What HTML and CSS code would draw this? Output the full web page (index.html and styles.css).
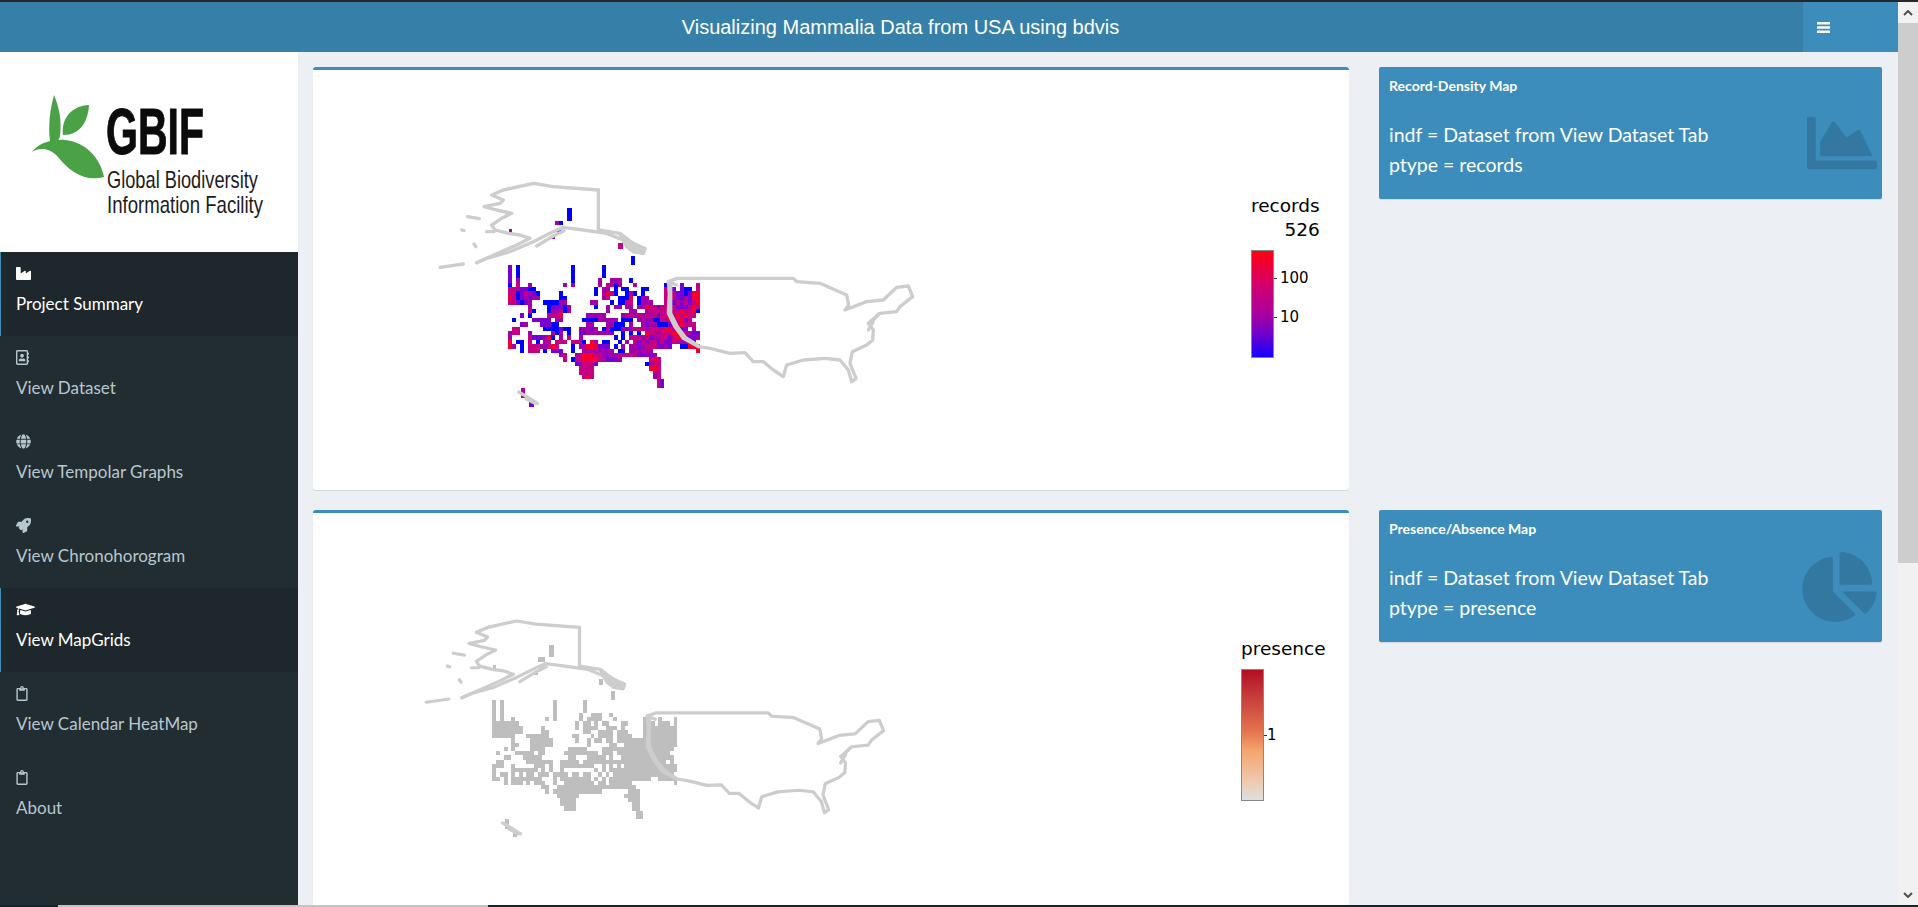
FILE: index.html
```html
<!DOCTYPE html>
<html lang="en">
<head>
    <meta charset="UTF-8">
    <title>Visualizing Mammalia Data from USA using bdvis</title>
    <link rel="stylesheet" href="styles.css">
</head>
<body>
    <div class="window">
        <div class="top-line"></div>
        <div class="frame">
            <div class="page">
                <header class="main-header">
                    <div class="header-title">Visualizing Mammalia Data from USA using bdvis</div>
                    <a class="sidebar-toggle">
                        <svg viewBox="0 0 13 11" width="13" height="11"><path d="M0 0h13v2.4H0zM0 4.3h13v2.4H0zM0 8.6h13V11H0z"/></svg>
                    </a>
                </header>
                <div class="wrapper">
                    <aside class="sidebar">
                        <div class="logo">
                            <svg class="logo-svg" viewBox="0 0 298 200" width="298" height="200">
                                <path class="leaf" d="M54 43C50 58 48 72 50 90L53 91C57 90 59 88 60 84C62 68 59 55 54 43Z"/>
                                <path class="leaf" d="M89 53C70 54 61 68 63 83C80 83 88 70 89 53Z"/>
                                <path class="leaf" d="M32 100C38 92 50 87 65 88C85 90 100 105 104 125C85 130 70 120 58 105C50 96 40 95 32 100Z"/>
                                <text class="logo-big" transform="translate(106 102) scale(.631 1)">GBIF</text>
                                <text class="logo-small" transform="translate(107 136) scale(.76 1)">Global Biodiversity</text>
                                <text class="logo-small" transform="translate(107 161) scale(.775 1)">Information Facility</text>
                            </svg>
                        </div>
                        <nav class="menu">
                            <a class="menu-item active">
                                <svg class="menu-icon" viewBox="0 0 512 512" width="15" height="15"><path d="M475.115 163.781L336 252.309v-68.28c0-18.916-20.931-30.399-36.885-20.248L160 252.309V56c0-13.255-10.745-24-24-24H24C10.745 32 0 42.745 0 56v400c0 13.255 10.745 24 24 24h464c13.255 0 24-10.745 24-24V184.029c0-18.917-20.931-30.399-36.885-20.248z"/></svg>
                                <span>Project Summary</span>
                            </a>
                            <a class="menu-item">
                                <svg class="menu-icon" viewBox="0 0 448 512" width="13" height="15"><path d="M436 160c6.6 0 12-5.4 12-12v-40c0-6.6-5.4-12-12-12h-20V48c0-26.5-21.5-48-48-48H48C21.5 0 0 21.5 0 48v416c0 26.5 21.5 48 48 48h320c26.5 0 48-21.5 48-48v-48h20c6.6 0 12-5.4 12-12v-40c0-6.6-5.4-12-12-12h-20v-64h20c6.6 0 12-5.4 12-12v-40c0-6.6-5.4-12-12-12h-20v-64h20zm-68 304H48V48h320v416zM208 256c35.3 0 64-28.7 64-64s-28.7-64-64-64-64 28.7-64 64 28.7 64 64 64zm-89.6 128h179.2c12.4 0 22.4-8.6 22.4-19.2v-19.2c0-31.8-30.1-57.6-67.2-57.6-10.8 0-18.7 8-44.8 8-26.9 0-33.4-8-44.8-8-37.1 0-67.2 25.8-67.2 57.6v19.2c0 10.6 10 19.2 22.4 19.2z"/></svg>
                                <span>View Dataset</span>
                            </a>
                            <a class="menu-item">
                                <svg class="menu-icon" viewBox="0 0 496 512" width="15" height="15"><path d="M336.5 160C322 70.7 287.8 8 248 8s-74 62.7-88.5 152h177zM152 256c0 22.2 1.2 43.5 3.3 64h185.3c2.1-20.5 3.3-41.8 3.3-64s-1.2-43.5-3.3-64H155.3c-2.1 20.5-3.3 41.8-3.3 64zm324.7-96c-28.6-67.9-86.5-120.4-158-141.6 24.4 33.8 41.2 84.7 50 141.6h108zM177.2 18.4C105.8 39.6 47.8 92.1 19.3 160h108c8.7-56.9 25.5-107.8 49.9-141.6zM487.4 192H372.7c2.1 21 3.3 42.5 3.3 64s-1.2 43-3.3 64h114.6c5.5-20.5 8.6-41.8 8.6-64s-3.1-43.5-8.5-64zM120 256c0-21.5 1.2-43 3.3-64H8.6C3.2 212.5 0 233.8 0 256s3.2 43.5 8.6 64h114.6c-2-21-3.2-42.5-3.2-64zm39.5 96c14.5 89.3 48.7 152 88.5 152s74-62.7 88.5-152h-177zm159.3 141.6c71.4-21.2 129.4-73.7 158-141.6h-108c-8.8 56.9-25.6 107.8-50 141.6zM19.3 352c28.6 67.9 86.5 120.4 158 141.6-24.4-33.8-41.2-84.7-50-141.6h-108z"/></svg>
                                <span>View Tempolar Graphs</span>
                            </a>
                            <a class="menu-item">
                                <svg class="menu-icon" viewBox="0 0 512 512" width="15" height="15"><path d="M505.05 19.1a15.89 15.89 0 0 0-12.2-12.2C460.65 0 435.46 0 410.36 0c-103.2 0-165.1 55.2-211.29 128H94.87A48 48 0 0 0 52 154.49l-49.42 98.8A24 24 0 0 0 24.07 288h103.77l-22.47 22.47a32 32 0 0 0 0 45.25l50.9 50.91a32 32 0 0 0 45.26 0L224 384.16V488a24 24 0 0 0 34.7 21.49l98.7-49.39a47.91 47.91 0 0 0 26.5-42.9V312.79c72.59-46.3 128-108.4 128-211.09.1-25.2.1-50.4-6.85-82.6zM384 168a40 40 0 1 1 40-40 40 40 0 0 1-40 40z"/></svg>
                                <span>View Chronohorogram</span>
                            </a>
                            <a class="menu-item active">
                                <svg class="menu-icon" viewBox="0 0 640 512" width="19" height="15"><path d="M622.34 153.2L343.4 67.5c-15.2-4.67-31.6-4.67-46.79 0L17.66 153.2c-23.54 7.23-23.54 38.36 0 45.59l48.63 14.94c-10.67 13.19-17.23 29.28-17.88 46.9C38.78 266.15 32 276.11 32 288c0 10.78 5.68 19.85 13.86 25.65L20.33 428.53C18.11 438.52 25.71 448 35.94 448h56.11c10.24 0 17.84-9.48 15.62-19.47L82.14 313.65C90.32 307.85 96 298.78 96 288c0-11.57-6.47-21.25-15.66-26.87.76-15.02 8.44-28.3 20.69-36.72L296.6 284.5c9.06 2.78 26.44 6.25 46.79 0l278.95-85.7c23.55-7.24 23.55-38.36 0-45.6zM352.79 315.09c-28.53 8.76-52.84 3.92-65.59 0l-145.02-44.55L128 384c0 35.35 85.96 64 192 64s192-28.65 192-64l-14.18-113.47-145.03 44.56z"/></svg>
                                <span>View MapGrids</span>
                            </a>
                            <a class="menu-item">
                                <svg class="menu-icon" viewBox="0 0 384 512" width="12" height="15"><path d="M336 64h-80c0-35.3-28.7-64-64-64s-64 28.7-64 64H48C21.5 64 0 85.5 0 112v352c0 26.5 21.5 48 48 48h288c26.5 0 48-21.5 48-48V112c0-26.5-21.5-48-48-48zM192 40c13.3 0 24 10.7 24 24s-10.7 24-24 24-24-10.7-24-24 10.7-24 24-24zm144 418c0 3.3-2.7 6-6 6H54c-3.3 0-6-2.7-6-6V118c0-3.3 2.7-6 6-6h42v36c0 6.6 5.4 12 12 12h168c6.6 0 12-5.4 12-12v-36h42c3.3 0 6 2.7 6 6z"/></svg>
                                <span>View Calendar HeatMap</span>
                            </a>
                            <a class="menu-item">
                                <svg class="menu-icon" viewBox="0 0 384 512" width="12" height="15"><path d="M336 64h-80c0-35.3-28.7-64-64-64s-64 28.7-64 64H48C21.5 64 0 85.5 0 112v352c0 26.5 21.5 48 48 48h288c26.5 0 48-21.5 48-48V112c0-26.5-21.5-48-48-48zM192 40c13.3 0 24 10.7 24 24s-10.7 24-24 24-24-10.7-24-24 10.7-24 24-24zm144 418c0 3.3-2.7 6-6 6H54c-3.3 0-6-2.7-6-6V118c0-3.3 2.7-6 6-6h42v36c0 6.6 5.4 12 12 12h168c6.6 0 12-5.4 12-12v-36h42c3.3 0 6 2.7 6 6z"/></svg>
                                <span>About</span>
                            </a>
                        </nav>
                    </aside>
                    <main class="content">
                        <div class="content-row">
                            <section class="box">
                                <div class="plot">
                                    <svg class="map map-records" id="mapRecords" viewBox="0 0 1560 750"></svg>
                                    <div class="legend legend-records">
                                        <div class="legend-title">records<br>526</div>
                                        <div class="legend-scale">
                                            <div class="bar bar-records"></div>
                                            <div class="ticks">
                                                <div class="tick">100</div>
                                                <div class="tick">10</div>
                                            </div>
                                        </div>
                                    </div>
                                </div>
                            </section>
                            <section class="value-box">
                                <p class="value-title">Record-Density Map</p>
                                <p class="value-text">indf = Dataset from View Dataset Tab<br>ptype = records</p>
                                <svg class="value-icon icon-area" viewBox="0 0 512 512" width="70" height="70"><path d="M500 384c6.6 0 12 5.4 12 12v40c0 6.6-5.4 12-12 12H12c-6.6 0-12-5.4-12-12V76c0-6.6 5.4-12 12-12h40c6.6 0 12 5.4 12 12v308h436zM372.7 159.5L288 216l-85.3-113.7c-5.1-6.8-15.5-6.3-19.9 1L96 248v104h384l-89.9-187.8c-3.2-6.5-11.4-8.7-17.4-4.7z"/></svg>
                            </section>
                        </div>
                        <div class="content-row">
                            <section class="box">
                                <div class="plot">
                                    <svg class="map map-presence" id="mapPresence" viewBox="0 0 1560 750"></svg>
                                    <div class="legend legend-presence">
                                        <div class="legend-title">presence</div>
                                        <div class="legend-scale">
                                            <div class="bar bar-presence"></div>
                                            <div class="ticks">
                                                <div class="tick">1</div>
                                            </div>
                                        </div>
                                    </div>
                                </div>
                            </section>
                            <section class="value-box">
                                <p class="value-title">Presence/Absence Map</p>
                                <p class="value-text">indf = Dataset from View Dataset Tab<br>ptype = presence</p>
                                <svg class="value-icon icon-pie" viewBox="0 0 544 512" width="75" height="70"><path d="M527.79 288H290.5l158.03 158.03c6.04 6.04 15.98 6.53 22.19.68 38.7-36.46 65.32-85.61 73.13-140.86 1.34-9.46-6.51-17.85-16.06-17.85zm-15.83-64.8C503.72 103.74 408.26 8.28 288.8.04 279.68-.59 272 7.1 272 16.24V240h223.77c9.14 0 16.82-7.68 16.19-16.8zM224 288V50.71c0-9.55-8.39-17.4-17.84-16.06C86.99 51.49-4.1 155.6.14 280.37 4.5 408.51 114.83 513.59 243.03 511.98c50.4-.63 96.97-16.87 135.26-44.03 7.9-5.6 8.42-17.23 2.75-23.06L224 288z"/></svg>
                            </section>
                        </div>
                    </main>
                </div>
            </div>
            <div class="scrollbar">
                <div class="scroll-btn"><svg viewBox="0 0 10 6" width="10" height="6"><path d="M1 5l4-4 4 4" /></svg></div>
                <div class="scroll-thumb"></div>
                <div class="scroll-track"></div>
                <div class="scroll-btn"><svg viewBox="0 0 10 6" width="10" height="6"><path d="M1 1l4 4 4-4" /></svg></div>
            </div>
        </div>
        <div class="taskbar"><div class="taskbar-window"></div></div>
    </div>
    <script src="map.js"></script>
</body>
</html>
```

FILE: styles.css
```css
html, body {
    margin: 0;
    padding: 0;
    height: 100%;
    overflow: hidden;
}

body {
    font-family: "Lato", "Open Sans", sans-serif;
    background-color: #ecf0f5;
}

.window {
    display: flex;
    flex-direction: column;
    height: 907px;
}

.top-line {
    height: 2px;
    background-color: #22282c;
    flex: none;
}

.frame {
    display: flex;
    flex: 1;
    min-height: 0;
}

.page {
    flex: 1;
    display: flex;
    flex-direction: column;
    min-width: 0;
}

/* header */
.main-header {
    display: flex;
    height: 50px;
    flex: none;
    background-color: #367fa9;
    color: #fff;
}

.header-title {
    flex: 1;
    text-align: center;
    font-family: "Liberation Sans", Arial, sans-serif;
    font-size: 20px;
    line-height: 50px;
    padding-right: 2px;
}

.sidebar-toggle {
    width: 95px;
    background-color: #3c8dbc;
    display: flex;
    align-items: center;
    padding-left: 14px;
    box-sizing: border-box;
}

.sidebar-toggle svg {
    fill: #fff;
}

.wrapper {
    display: flex;
    flex: 1;
    min-height: 0;
}

/* sidebar */
.sidebar {
    width: 298px;
    flex: none;
    background-color: #222d32;
}

.logo {
    height: 200px;
    background-color: #fff;
}

.logo-svg {
    display: block;
}

.leaf {
    fill: #4aa146;
}

.logo-big {
    font-family: "Liberation Sans", Arial, sans-serif;
    font-weight: bold;
    font-size: 65px;
    fill: #0b0b0b;
    stroke: #0b0b0b;
    stroke-width: 1;
}

.logo-small {
    font-family: "Liberation Sans", Arial, sans-serif;
    font-size: 24px;
    fill: #1c1c1c;
}

.menu-item {
    display: flex;
    flex-direction: column;
    align-items: flex-start;
    height: 84px;
    box-sizing: border-box;
    padding: 14px 5px 0 15px;
    border-left: 1px solid transparent;
    color: #b8c7ce;
    font-size: 17px;
}

.menu-item.active {
    color: #fff;
    background-color: #1e282c;
    border-left-color: #3c8dbc;
}

.menu-icon {
    fill: currentColor;
    margin-bottom: 12px;
}

/* main column */
.content {
    flex: 1;
    padding: 15px 16px 0 15px;
    overflow: hidden;
}

.content-row {
    display: grid;
    grid-template-columns: 1036px 503px;
    gap: 30px;
    align-items: start;
    margin-bottom: 20px;
}

.box {
    background-color: #fff;
    border-top: 3px solid #3c8dbc;
    border-radius: 3px;
    box-shadow: 0 1px 1px rgba(0, 0, 0, 0.1);
    padding: 10px;
}

.plot {
    display: flex;
    align-items: flex-start;
    height: 400px;
}

.map {
    display: block;
    flex: none;
}

.map-records {
    width: 520px;
    height: 250px;
    margin: 90px 0 0 97px;
}

.map-presence {
    width: 503px;
    height: 242px;
    margin: 85px 0 0 84px;
}

.legend {
    font-family: "DejaVu Sans", Verdana, sans-serif;
    color: #000;
    flex: none;
}

.legend-records {
    margin: 114px 0 0 311px;
}

.legend-presence {
    margin: 114px 0 0 331px;
}

.legend-title {
    font-size: 18.5px;
    line-height: 24px;
    text-align: right;
    margin-bottom: 8px;
}

.legend-presence .legend-title {
    text-align: left;
    margin-bottom: 8px;
}

.legend-scale {
    display: flex;
}

.bar {
    width: 23px;
    box-sizing: border-box;
    border: 1px solid #888;
}

.bar-records {
    height: 108px;
    background: linear-gradient(to bottom, #ff0010, #d50068 30%, #a800a0 60%, #6a00d0 80%, #1500ff);
}

.bar-presence {
    height: 132px;
    background: linear-gradient(to bottom, #b10f23, #c63c3a 20%, #e3734f 47%, #f4a56d 62%, #eec9ae 85%, #dfdfdf);
}

.ticks {
    display: flex;
    flex-direction: column;
    gap: 19px;
    padding-top: 18px;
}

.legend-presence .ticks {
    padding-top: 56px;
}

.tick {
    display: flex;
    align-items: center;
    height: 20px;
    font-size: 15px;
}

.tick::before {
    content: "";
    width: 3px;
    height: 1px;
    background-color: #333;
    margin-right: 3px;
}

.legend-presence .tick::before {
    margin-right: 0;
}

/* value boxes */
.value-box {
    position: relative;
    height: 132px;
    box-sizing: border-box;
    background-color: #3c8dbc;
    border-radius: 2px;
    box-shadow: 0 1px 1px rgba(0, 0, 0, 0.1);
    padding: 10px 10px 0;
    color: #fff;
    overflow: hidden;
}

.value-title {
    margin: 0;
    font-size: 14px;
    font-weight: bold;
    line-height: 18px;
}

.value-text {
    margin: 25px 0 0;
    font-size: 19.5px;
    line-height: 30px;
}

.value-icon {
    position: absolute;
    right: 5px;
    top: 41px;
    fill: rgba(0, 0, 0, 0.15);
}

.icon-pie {
    top: 42px;
}

/* maps */
.cell {
    shape-rendering: crispEdges;
}

.outline {
    fill: none;
    stroke: #cdcdcd;
    stroke-width: 10;
    stroke-linejoin: round;
    stroke-linecap: round;
}

.outline-solid {
    fill: #cdcdcd;
}

/* fake browser scrollbar */
.scrollbar {
    width: 20px;
    flex: none;
    display: flex;
    flex-direction: column;
    background-color: #f1f1f1;
}

.scroll-btn {
    height: 21px;
    display: flex;
    align-items: center;
    justify-content: center;
    flex: none;
}

.scroll-btn svg {
    fill: none;
    stroke: #505050;
    stroke-width: 2;
}

.scroll-thumb {
    height: 540px;
    flex: none;
    background-color: #cdcdcd;
}

.scroll-track {
    flex: 1;
}

.taskbar {
    height: 2px;
    flex: none;
    background-color: #14242e;
    padding-left: 58px;
}

.taskbar-window {
    width: 430px;
    height: 2px;
    background-color: #c4c4c4;
}
```

FILE: map.js
```js
// Grid cells of the two maps, one string per row.
// b blue, v violet, p purple, m magenta, r red, . empty
const rows = [
    "v.b.............b.......b",
    "v.b.............b.......b",
    "v.b.............b.......b",
    "v.p.............b......p..ppp..b",
    "b.m..p........p.p......p.mmbp...m.......bp..v...m",
    "mmpvvbb...............b.pp.b.bb...bb....mpv.vbb.m",
    "mmbvmpvb.....b........b.prmb..bpb.b.....mrmvvbvrr",
    "rmbvpvpp.....bb.........pm..bbbr.bpp....mvmvvpvrr",
    "mmvbvp...bbbbpp......pp...b.bbmm.bppp...mvvmvmvmr",
    ".....p....bvvvbp......b..p.pp.pp.pprmmvmmmmvvvmrm",
    ".....mb...bppmbp.........p.....pp..pmmmmmmmmrmmrb",
    "...v.b....mmmr......ppppp....pmmpmpmpmvmmrmrmrmm.",
    ".b....vvvvv.pp.....bbbbppppp.bbb.ppppbbmmrrmrvm..",
    "...vp...vvvbb.......pp...ppbbb.p..pvppbbbvpmrmmm.",
    ".mm......bbbbvbb..vppvp.bpbbbpvpmmmpmmmmrrmmvv.p.",
    "pmm..p.....pbp.b..vvppppppv..b.b.b.rmmpmmmrrmmpvv",
    "p....mvvvprb.p.m..p........b.b.mmmpmvppmmvmrrpvvp",
    "r.bb.m.b.pp.mmm.mmmb.rp.bb..b.p.mvmvmmvmvvmmppvv.",
    "rp.b.mmmppmrm...b.pprrrvvv.b.p.ppvpmmmvvpv..bbrrr",
    "...b.mmm.b.vvv..b..pppppppp.bb.pppppp...........r",
    ".............pm..pmrrrmmpvppmmmmmvvpvp",
    "..............m.bmmrrrrmpvvvp.......mrm",
    ".................vvmmmv............bpmm",
    "..................mmmm..............rrm",
    "..................mmmm...............pm",
    "...................mrm...............pm",
    "......................................mv",
    "......................................mv"
];

// cells that lie off the main block: x, y, w, h, colour key
const extras = [
    [441, 113, 15, 39, "b"], [405, 153, 12, 13, "p"], [417, 153, 12, 13, "b"],
    [268, 178, 7, 12, "p"], [410, 180, 14, 8, "b"], [395, 200, 10, 8, "p"],
    [595, 220, 13, 18, "m"], [633, 258, 12, 26, "b"],
    [304, 655, 11, 30, "p"], [328, 690, 14, 20, "v"]
];

const colours = { b: "#0000ff", v: "#7a00d2", p: "#a400a8", m: "#c60082", r: "#f5002e" };

const outlines = [
    "M535 60V180L600 190L640 222L675 236L670 250L640 245L605 208L560 190L490 180L430 172L390 190L340 215L270 245L200 265L170 278",
    "M170 278L290 225L330 205L300 195L265 190L225 180L215 165L245 145L275 130L230 120L192 110L240 100L250 90L215 75L250 60L340 40L400 50L535 60",
    "M350 228L400 198L432 182",
    "M60 292L130 282", "M143 140L178 146", "M125 180L132 182", "M200 185L222 185", "M162 222L168 230",
    "M296 666L320 680L352 700", "M318 686L345 700",
    "M745 335L772 325H1120L1130 335L1200 340L1280 375L1286 405L1275 420L1340 395L1390 390L1430 352L1465 348L1478 380L1440 410L1430 425L1380 430L1345 460L1360 480L1358 510L1340 525L1297 545L1290 580L1308 625L1295 635L1285 600L1260 570L1215 565L1150 570L1100 585L1090 620L1060 600L1030 575L1000 575L975 548L930 550L870 535L835 530L790 505L765 470L745 430L748 370Z",
    "M1350 462L1375 432", "M1345 480L1360 455", "M745 335L770 345", "M752 340V430L772 470L797 503L835 527"
];

// panhandle of Alaska, drawn filled
const solids = ["M600 192L640 220L675 236L670 250L640 245L620 230Z"];

const NS = "http://www.w3.org/2000/svg";

function addRect(svg, x, y, w, h, fill) {
    const rect = document.createElementNS(NS, "rect");
    rect.setAttribute("class", "cell");
    rect.setAttribute("x", x);
    rect.setAttribute("y", y);
    rect.setAttribute("width", w);
    rect.setAttribute("height", h);
    rect.setAttribute("fill", fill);
    svg.appendChild(rect);
}

function addPath(svg, d, cls) {
    const path = document.createElementNS(NS, "path");
    path.setAttribute("class", cls);
    path.setAttribute("d", d);
    svg.appendChild(path);
}

function drawMap(svg, colourOf) {
    rows.forEach((row, r) => {
        [...row].forEach((key, c) => {
            if (key !== ".") addRect(svg, 265 + c * 11.7, 285 + r * 13.2, 11.9, 13.4, colourOf(key));
        });
    });
    extras.forEach(([x, y, w, h, key]) => addRect(svg, x, y, w, h, colourOf(key)));
    outlines.forEach((d) => addPath(svg, d, "outline"));
    solids.forEach((d) => addPath(svg, d, "outline outline-solid"));
}

drawMap(document.getElementById("mapRecords"), (key) => colours[key]);
drawMap(document.getElementById("mapPresence"), () => "#bebebe");
```
